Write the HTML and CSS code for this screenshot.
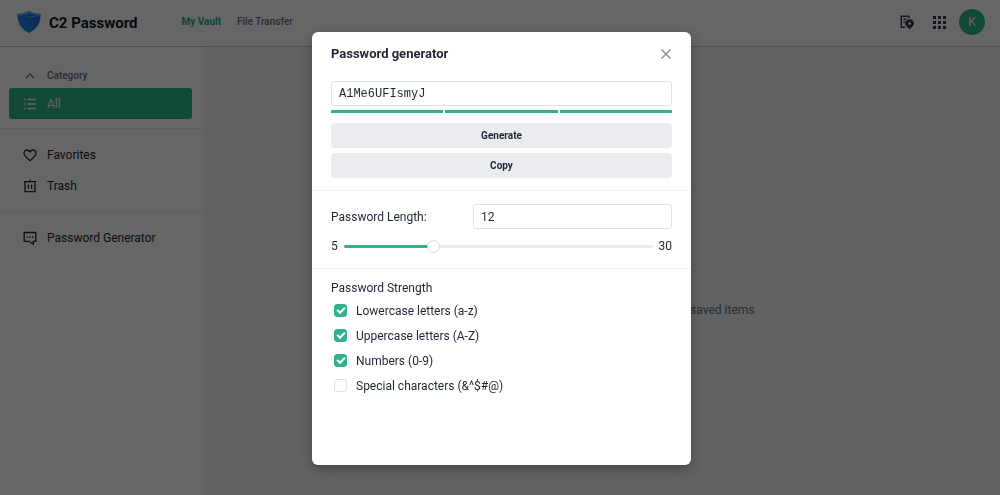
FILE: index.html
```html
<!DOCTYPE html>
<html lang="en">
<head>
<meta charset="utf-8">
<title>C2 Password</title>
<link rel="stylesheet" href="styles.css">
</head>
<body>
<div class="app">
  <header class="topbar">
    <svg class="logo" viewBox="0 0 24 24" aria-hidden="true">
      <defs><linearGradient id="shield" x1="0" y1="1" x2="1" y2="0"><stop offset="0" stop-color="#1f8dfa"/><stop offset="1" stop-color="#1d5fc4"/></linearGradient></defs>
      <path fill="url(#shield)" d="M.5 4C5 4 9 3 12 1c3 2 7 3 11.500 3C23.800 12 20.500 19 12 23 3.500 19 .2 12 .5 4z"/>
      <path fill="#4aaeff" d="M.5 4C5 4 9 3 12 1c3 2 7 3 11.500 3l-.1 1.600C17 7.500 10 8 5.500 6.500 11 7.500 17 6 20 4.800 16 5 13.500 4 12 3.200 9 5 5 5.600.5 5.600z"/>
    </svg>
    <h1 class="brand">C2 Password</h1>
    <nav class="tabs">
      <a class="tab tab-active" href="#vault">My Vault</a>
      <a class="tab" href="#transfer">File Transfer</a>
    </nav>
    <div class="tools">
      <button class="tool" aria-label="Activity">
        <svg viewBox="0 0 16 16" width="16" height="16"><path fill="none" stroke="currentColor" stroke-width="1.500" d="M6 13.200H2.300V2.300h7.500V4M4.500 5.200h3M4.500 8h1.500"/><path fill="currentColor" fill-rule="evenodd" d="M10.600 5.200A4.400 4.400 0 0 1 15 9.600c0 2.600-2.300 3.600-4.400 5.800-2.100-2.200-4.400-3.200-4.400-5.800a4.400 4.400 0 0 1 4.400-4.400zm0 3a1.400 1.400 0 1 0 0 2.800 1.400 1.400 0 0 0 0-2.800z"/></svg>
      </button>
      <button class="tool" aria-label="Apps">
        <svg viewBox="0 0 13 13" width="13" height="13" fill="currentColor"><path d="M0 0h3v3H0zM5 0h3v3H5zM10 0h3v3h-3zM0 5h3v3H0zM5 5h3v3H5zM10 5h3v3h-3zM0 10h3v3H0zM5 10h3v3H5zM10 10h3v3h-3z"/></svg>
      </button>
      <button class="avatar">K</button>
    </div>
  </header>
  <div class="body">
    <nav class="sidebar">
      <div class="group">
        <button class="item category">
          <svg viewBox="0 0 14 14"><path d="M3 9l4-4 4 4"/></svg>Category
        </button>
        <a class="item item-active" href="#all">
          <svg viewBox="0 0 14 14"><path d="M4.500 2.500H13M4.500 7H13M4.500 11.500H13M1 2.500h1.600M1 7h1.600M1 11.500h1.600"/></svg>All
        </a>
      </div>
      <div class="group">
        <a class="item" href="#favorites">
          <svg viewBox="0 0 14 14"><path d="M7 12.700C3.500 9.900 1 7.700 1 5.100 1 3.200 2.300 2 4 2c1.300 0 2.300.7 3 1.800C7.700 2.700 8.700 2 10 2c1.700 0 3 1.200 3 3.100 0 2.600-2.500 4.800-6 7.600z"/></svg>Favorites
        </a>
        <a class="item" href="#trash">
          <svg viewBox="0 0 14 14"><path d="M.8 2.700h12.400M2 2.700v10h10v-10M7 2.700V.8M5.400 5.500v4.200M8.600 5.500v4.200"/></svg>Trash
        </a>
      </div>
      <div class="group">
        <a class="item" href="#generator">
          <svg viewBox="0 0 14 14"><path d="M6 10.300H1.200V1.500h11.600v8.800h-2.500v2.900L6 10.300zM3.700 6h1.400M6.300 6h1.400M8.900 6h1.400"/></svg>Password Generator
        </a>
      </div>
    </nav>
    <main class="content">
      <p class="empty">There are no items here yet. Try adding your saved items</p>
    </main>
  </div>
</div>

<div class="overlay">
  <section class="modal" role="dialog" aria-modal="true" aria-labelledby="dialog-title">
    <div class="section">
      <div class="modal-head">
        <h2 class="title" id="dialog-title">Password generator</h2>
        <button class="close" aria-label="Close"><svg viewBox="0 0 12 12" width="12" height="12"><path d="M1.500 1.500l9 9M10.500 1.500l-9 9"/></svg></button>
      </div>
      <input class="field password" type="text" aria-label="Generated password" value="A1Me6UFIsmyJ">
      <div class="meter"><span></span><span></span><span></span></div>
      <div class="actions">
        <button class="action">Generate</button>
        <button class="action">Copy</button>
      </div>
    </div>
    <div class="section length">
      <div class="length-row">
        <label for="length">Password Length:</label>
        <input class="field number" id="length" type="text" inputmode="numeric" value="12">
      </div>
      <div class="range-row">
        <span>5</span>
        <input class="range" type="range" min="5" max="30" value="12" aria-label="Password length">
        <span>30</span>
      </div>
    </div>
    <fieldset class="section strength">
      <legend class="legend">Password Strength</legend>
      <label class="check"><input type="checkbox" checked>Lowercase letters (a-z)</label>
      <label class="check"><input type="checkbox" checked>Uppercase letters (A-Z)</label>
      <label class="check"><input type="checkbox" checked>Numbers (0-9)</label>
      <label class="check"><input type="checkbox">Special characters (&amp;^$#@)</label>
    </fieldset>
  </section>
</div>
</body>
</html>
```

FILE: styles.css
```css
* { box-sizing: border-box; }

body {
  margin: 0;
  font: 12px/16px Roboto, "Liberation Sans", sans-serif;
  color: #1d2633;
}

button, input { font: inherit; color: inherit; }
button { border: 0; background: none; padding: 0; cursor: pointer; }
a { color: inherit; text-decoration: none; }

.app { display: flex; flex-direction: column; height: 100vh; }

.topbar {
  display: flex;
  align-items: center;
  height: 47px;
  padding: 0 15px 2px 17px;
  border-bottom: 1px solid #c9cbcf;
}
.logo { width: 24px; height: 24px; }
.brand { margin: 0 44px 0 8px; padding-top: 2px; font-size: 15px; line-height: 20px; font-weight: 700; color: #10141c; }
.tabs { display: flex; gap: 16px; font-size: 10px; font-weight: 500; color: #69707a; }
.tab-active { color: #1fae84; font-weight: 700; }
.tools { display: flex; align-items: center; gap: 8px; margin-left: auto; }
.tool { display: grid; place-items: center; color: #303b4a; height: 20px; width: 24px; }
.avatar { width: 26px; height: 26px; border-radius: 50%; background: #2fb38c; color: #fff; font-size: 12px; }

.body { display: flex; flex: 1; min-height: 0; }
.sidebar { width: 204px; flex: none; border-right: 1px solid #f5f6f9; }
.group { display: flex; flex-direction: column; padding: 10px 11px 10px 9px; border-bottom: 1px solid #ebecf0; }
.group:first-child { padding: 16px 11px 9px 9px; }
.group:last-child { border: 0; }
.item {
  display: flex;
  align-items: center;
  gap: 10px;
  height: 31px;
  padding-left: 14px;
  border-radius: 3px;
}
.item svg { width: 14px; height: 14px; fill: none; stroke: currentColor; stroke-width: 1.3; }
.category { height: 25px; font-size: 10px; font-weight: 500; color: #69707a; }
.item-active { background: #2fb38c; color: #fff; }

.content { flex: 1; display: grid; place-items: center; background: #f3f4f8; }
.empty { margin: 78px 0 0; padding-left: 5px; color: #69707a; }

.overlay {
  position: fixed;
  inset: 0;
  display: flex;
  justify-content: center;
  padding: 32px 0 30px 3px;
  background: rgba(0, 0, 0, 0.6);
}
.modal {
  width: 379px;
  overflow: auto;
  border-radius: 6px;
  background: #fff;
  box-shadow: 0 4px 14px rgba(0, 0, 0, 0.3);
}
.section { padding: 12px 19px; border-bottom: 1px solid #f1f2f5; }

.modal-head { display: flex; align-items: center; justify-content: space-between; height: 20px; margin-bottom: 17px; }
.title { margin: 0; font-size: 13px; font-weight: 700; }
.close { display: grid; place-items: center; }
.close svg { stroke: #8d939c; stroke-width: 1.5; }

.field { width: 100%; height: 25px; padding: 0 7px; border: 1px solid #e0e2e9; border-radius: 3px; background: #fff; }
.password { display: block; font-family: "Courier New", "Liberation Mono", monospace; }
.meter { display: flex; gap: 2px; margin: 4px 0 10px; }
.meter span { flex: 1; height: 3px; background: #33b18d; }
.actions { display: grid; gap: 5px; }
.action { height: 25px; border-radius: 4px; background: #ebecf0; font-size: 10px; font-weight: 700; }

.length { padding: 13px 19px 14px; }
.length-row { display: flex; align-items: center; justify-content: space-between; }
.number { width: 199px; }
.range-row { display: flex; align-items: center; gap: 6px; margin-top: 9px; }
.range { flex: 1; min-width: 0; height: 13px; margin: 0; appearance: none; background: none; }
.range::-webkit-slider-runnable-track {
  height: 3px;
  border-radius: 2px;
  background: linear-gradient(to right, #33b18d 29%, #ebecf0 29%);
}
.range::-webkit-slider-thumb {
  appearance: none;
  width: 13px;
  height: 13px;
  margin-top: -5px;
  border: 1px solid #d8dae0;
  border-radius: 50%;
  background: #fff;
}

.strength { display: flex; flex-direction: column; margin: 0; border: 0; padding: 11px 19px; }
.legend { float: left; padding: 0; margin-bottom: 2px; }
.check { display: flex; align-items: center; gap: 9px; height: 25px; padding-left: 3px; }
.check input {
  appearance: none;
  width: 13px;
  height: 13px;
  margin: 0;
  border: 1px solid #e0e2e9;
  border-radius: 3px;
  display: grid;
  place-items: center;
}
.check input:checked { border-color: #33b18d; background: #33b18d; }
.check input:checked::before {
  content: "";
  box-sizing: border-box;
  width: 8px;
  height: 5px;
  margin-bottom: 2px;
  border: solid #fff;
  border-width: 0 0 2px 2px;
  transform: rotate(-45deg);
}
```
